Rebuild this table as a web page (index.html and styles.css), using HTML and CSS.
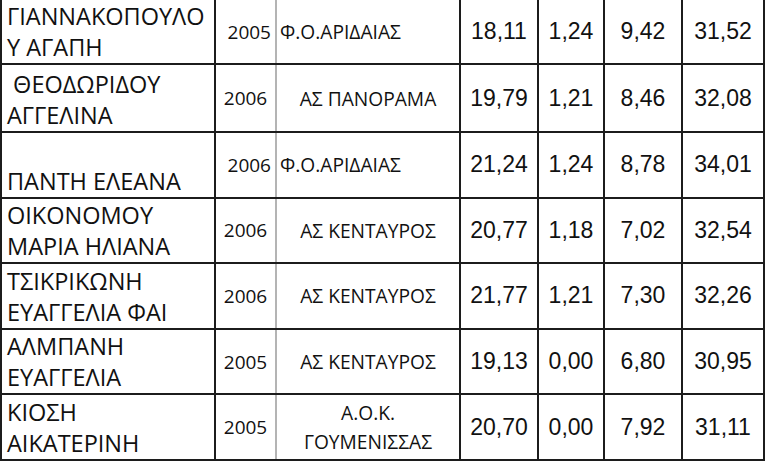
FILE: index.html
```html
<!DOCTYPE html>
<html>
<head>
  <title>Αποτελέσματα</title>
  <link rel="stylesheet" href="styles.css">
</head>
<body>

  <!--RESULTS TABLE-->
  <table class="results">
    <colgroup>
      <col class="c-name">
      <col class="c-year">
      <col class="c-club">
      <col class="c-num1">
      <col class="c-num2">
      <col class="c-num3">
      <col class="c-num4">
    </colgroup>
    <tr class="row-first">
      <td class="name">ΓΙΑΝΝΑΚΟΠΟΥΛΟ<br>Υ ΑΓΑΠΗ</td>
      <td class="year right">2005</td>
      <td class="club left">Φ.Ο.ΑΡΙΔΑΙΑΣ</td>
      <td class="num">18,11</td>
      <td class="num">1,24</td>
      <td class="num">9,42</td>
      <td class="num">31,52</td>
    </tr>
    <tr class="row-tall">
      <td class="name">&nbsp;ΘΕΟΔΩΡΙΔΟΥ<br>ΑΓΓΕΛΙΝΑ</td>
      <td class="year">2006</td>
      <td class="club">ΑΣ ΠΑΝΟΡΑΜΑ</td>
      <td class="num">19,79</td>
      <td class="num">1,21</td>
      <td class="num">8,46</td>
      <td class="num">32,08</td>
    </tr>
    <tr>
      <td class="name">ΠΑΝΤΗ ΕΛΕΑΝΑ</td>
      <td class="year right">2006</td>
      <td class="club left">Φ.Ο.ΑΡΙΔΑΙΑΣ</td>
      <td class="num">21,24</td>
      <td class="num">1,24</td>
      <td class="num">8,78</td>
      <td class="num">34,01</td>
    </tr>
    <tr>
      <td class="name">ΟΙΚΟΝΟΜΟΥ<br>ΜΑΡΙΑ ΗΛΙΑΝΑ</td>
      <td class="year">2006</td>
      <td class="club">ΑΣ ΚΕΝΤΑΥΡΟΣ</td>
      <td class="num">20,77</td>
      <td class="num">1,18</td>
      <td class="num">7,02</td>
      <td class="num">32,54</td>
    </tr>
    <tr>
      <td class="name">ΤΣΙΚΡΙΚΩΝΗ<br>ΕΥΑΓΓΕΛΙΑ ΦΑΙ</td>
      <td class="year">2006</td>
      <td class="club">ΑΣ ΚΕΝΤΑΥΡΟΣ</td>
      <td class="num">21,77</td>
      <td class="num">1,21</td>
      <td class="num">7,30</td>
      <td class="num">32,26</td>
    </tr>
    <tr>
      <td class="name">ΑΛΜΠΑΝΗ<br>ΕΥΑΓΓΕΛΙΑ</td>
      <td class="year">2005</td>
      <td class="club">ΑΣ ΚΕΝΤΑΥΡΟΣ</td>
      <td class="num">19,13</td>
      <td class="num">0,00</td>
      <td class="num">6,80</td>
      <td class="num">30,95</td>
    </tr>
    <tr>
      <td class="name">ΚΙΟΣΗ<br>ΑΙΚΑΤΕΡΙΝΗ</td>
      <td class="year">2005</td>
      <td class="club two-line">Α.Ο.Κ.<br>ΓΟΥΜΕΝΙΣΣΑΣ</td>
      <td class="num">20,70</td>
      <td class="num">0,00</td>
      <td class="num">7,92</td>
      <td class="num">31,11</td>
    </tr>
  </table>

</body>
</html>
```

FILE: styles.css
```css
body {
  margin: 0;
  background-color: #ffffff;
  color: #111111;
  font-family: "Open Sans", sans-serif;
}
/* Table grid */
.results {
  border-collapse: collapse;
  table-layout: fixed;
  width: 765px;
}
.c-name { width: 214px; }
.c-year { width: 61px; }
.c-club { width: 184px; }
.c-num1 { width: 78px; }
.c-num2 { width: 66px; }
.c-num3 { width: 78px; }
.c-num4 { width: 82px; }
.results td {
  border: 2px solid #1c1c1c;
  padding: 0;
  height: 63.6px;
  vertical-align: middle;
  overflow: hidden;
  white-space: nowrap;
}
.results tr:first-child td {
  border-top: none;
  height: 63px;
}
.results .row-tall td {
  height: 66px;
}
/* Name column */
.name {
  font-size: 23.5px;
  line-height: 31px;
  padding-left: 5px !important;
  vertical-align: bottom !important;
}
/* Year and club columns */
.year {
  font-size: 19px;
  text-align: center;
  border-right-color: #b4b4b4 !important;
}
.year.right {
  text-align: right;
  padding-right: 4px !important;
}
.club {
  font-size: 19.2px;
  text-align: center;
  border-left-color: #b4b4b4 !important;
}
.club.left {
  text-align: left;
  padding-left: 3px !important;
}
.club.two-line {
  line-height: 29px;
}
/* Number columns */
.num {
  font-family: "Liberation Sans", Arial, sans-serif;
  font-size: 23px;
  text-align: center;
}
```
